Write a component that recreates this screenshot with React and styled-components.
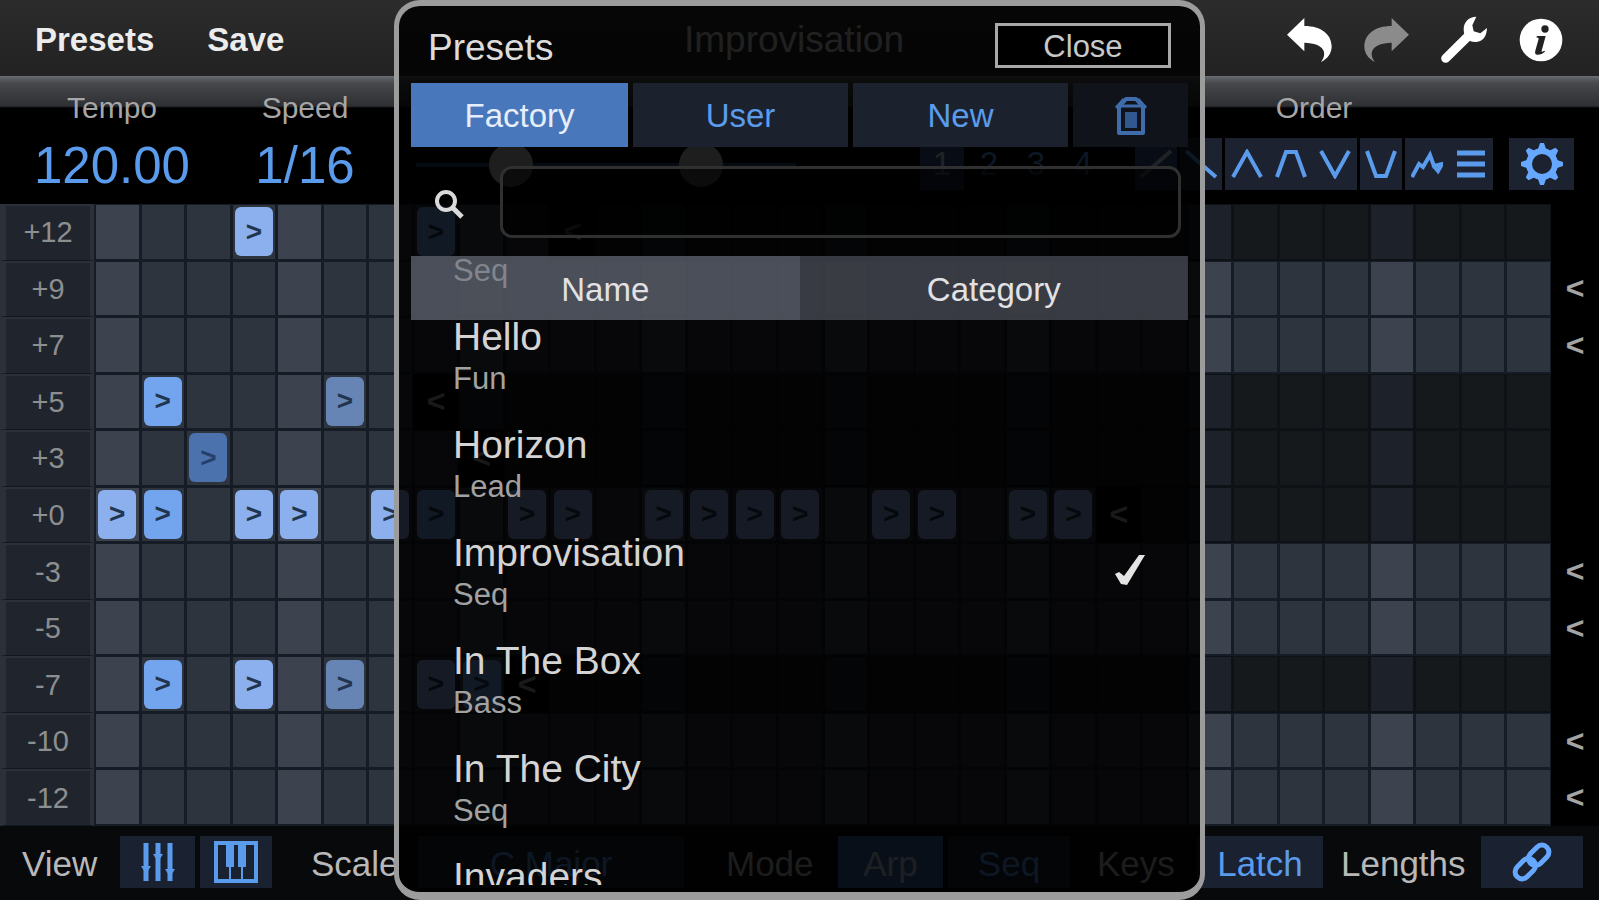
import React from "react";
import styled, { createGlobalStyle, css } from "styled-components";

const BLUE = "#5b9bec";

const GlobalStyle = createGlobalStyle`
  *, *::before, *::after { box-sizing: border-box; }
  html, body { margin: 0; background: #000; }
  body, button, input { font-family: "Liberation Sans", Arial, Helvetica, sans-serif; }
  button { margin: 0; padding: 0; border: 0; background: none; color: inherit; cursor: pointer; }
`;

const Screen = styled.div`
  position: relative;
  display: flex;
  flex-direction: column;
  min-height: 100vh;
  overflow: hidden;
  color: #c4c4c4;
`;

const TopBar = styled.header`
  display: grid;
  grid-template-columns: 1fr auto 1fr;
  align-items: center;
  height: 76px;
  padding: 4px 36px 0 35px;
  background: linear-gradient(#2c2c2c, #222);
`;

const TopActions = styled.div`
  display: flex;
  align-items: center;
  justify-content: ${(p) => (p.$end ? "flex-end" : "flex-start")};
  gap: ${(p) => (p.$end ? "32px" : "53px")};
`;

const TopButton = styled.button`
  display: flex;
  height: 72px;
  align-items: center;
  font-size: 33px;
  font-weight: 700;
  color: #ececec;
`;

const SongTitle = styled.h1`
  margin: 0 10px 0 0;
  font-size: 37px;
  line-height: 72px;
  font-weight: 400;
  color: #d8d8d8;
`;

const Params = styled.section`
  display: flex;
  height: 128px;
  padding: 0 25px 0 12px;
  background: linear-gradient(#6a6d71 0, #53565b 4px, #45474b 8px, #2d2f33 30px, #000 32px);
`;

const Param = styled.div`
  display: flex;
  flex-direction: column;
  align-items: center;
  flex: 0 0 ${(p) => p.$w || "auto"};
  margin-left: ${(p) => p.$gap || "0"};
  padding-top: 16px;
`;

const ParamLabel = styled.span`
  height: 32px;
  font-size: 30px;
  line-height: 32px;
  color: #a6a6a6;
`;

const ParamValue = styled.output`
  margin-top: 11px;
  font-size: 51px;
  line-height: 62px;
  color: ${BLUE};
`;

const Slider = styled.input`
  appearance: none;
  width: 190px;
  height: 44px;
  margin: 19px 0 0;
  background: linear-gradient(#2c4870, #2c4870) center / 100% 4px no-repeat;

  &::-webkit-slider-thumb {
    appearance: none;
    width: 44px;
    height: 44px;
    border-radius: 50%;
    background: #c8c8c8;
  }
`;

const ButtonStrip = styled.div`
  display: flex;
  gap: ${(p) => p.$gap || "0"};
  margin-top: 14px;
`;

const StripGroup = styled.div`
  display: flex;
  background: #1c2230;
`;

const StripButton = styled.button`
  display: flex;
  align-items: center;
  justify-content: center;
  width: ${(p) => p.$w || "44px"};
  height: 52px;
  font-size: 33px;
  background: ${(p) => (p.$on ? "#35598f" : "transparent")};
  color: ${(p) => (p.$on ? "#d8e4f8" : BLUE)};
`;

const Sequencer = styled.main`
  display: grid;
  flex: 1;
  grid-auto-rows: minmax(0, 1fr);
  background: #000;
`;

const Lane = styled.div`
  display: grid;
  grid-template-columns: 94px repeat(32, minmax(0, 1fr)) 48px;
`;

const LaneLabel = styled.div`
  display: flex;
  align-items: center;
  justify-content: center;
  border: solid #2c3039;
  border-width: 2px 4px 1px 6px;
  border-bottom-color: #12171e;
  background: #20252d;
  font-size: 29px;
  color: #8d8e90;
`;

const cellTone = (p) => {
  if (p.$end) return "#000";
  if (p.$off) return p.$beat ? "#1d2129" : "#16191c";
  return p.$beat ? "#3c434e" : "#2e343e";
};

const Cell = styled.button`
  display: flex;
  align-items: center;
  justify-content: center;
  border: solid ${(p) => (p.$end ? "#000" : p.$off ? "#0e1217" : "#161c25")};
  border-width: 1px 1px 2px 2px;
  background: ${cellTone};
  font-size: 32px;
  font-weight: 700;
  color: #aaa;
`;

const noteTones = {
  light: "#8bb0ed",
  mid: "#73a5ee",
  dim: "#6685b5",
  dark: "#4c72ae",
};

const Note = styled.span`
  display: flex;
  align-items: center;
  justify-content: center;
  width: 38px;
  height: 49px;
  flex: none;
  border-radius: 6px;
  background: ${(p) => noteTones[p.$tone]};
  color: ${(p) => (p.$tone === "dark" ? "#26406c" : "#22354f")};
  font-size: 28px;
  font-weight: 700;
`;

const LaneEnd = styled.div`
  display: flex;
  align-items: center;
  justify-content: center;
  font-size: 32px;
  font-weight: 700;
  color: #a4a4a4;
`;

const BottomBar = styled.footer`
  display: grid;
  grid-template-columns: 289fr 415fr 371fr 244fr 242fr;
  height: 74px;
  padding: 10px 16px 12px 22px;
  background: #08090b;
`;

const BottomGroup = styled.div`
  display: flex;
  align-items: center;
`;

const BottomLabel = styled.span`
  width: ${(p) => p.$w};
  flex: none;
  padding-top: 3px;
  font-size: 35px;
  line-height: 49px;
  color: #b8b8b8;
`;

const BottomButton = styled.button`
  display: flex;
  align-items: center;
  justify-content: center;
  width: ${(p) => p.$w};
  height: 52px;
  padding-top: 3px;
  margin-right: 5px;
  flex: none;
  font-size: 35px;
  background: ${(p) => (p.$on ? "#3f69aa" : "#1a2130")};
  color: ${(p) => (p.$on ? "#c4d2e8" : BLUE)};

  &:last-child { margin-right: 0; }
  svg { margin-bottom: 3px; }
`;

const Overlay = styled.div`
  position: absolute;
  inset: 0;
  display: flex;
  justify-content: center;
`;

const Dialog = styled.section`
  display: flex;
  flex-direction: column;
  width: 811px;
  max-width: 100%;
  padding: 0 12px 7px;
  overflow: hidden;
  border: solid #9c9c9c;
  border-width: 6px 5px 8px;
  border-radius: 26px;
  background: rgba(0, 0, 0, 0.85);
  background-clip: padding-box;
`;

const DialogHeader = styled.div`
  display: flex;
  align-items: center;
  justify-content: space-between;
  height: 77px;
  padding: 2px 17px 0 17px;
`;

const DialogTitle = styled.h2`
  margin: 0;
  padding-top: 4px;
  font-size: 37px;
  font-weight: 400;
  color: #dcdcdc;
`;

const CloseButton = styled.button`
  width: 176px;
  height: 45px;
  padding-top: 2px;
  border: 3px solid #a8a8a8;
  background: #000;
  font-size: 31px;
  line-height: 38px;
  color: #c8c8c8;
`;

const Tabs = styled.div`
  display: grid;
  grid-template-columns: 217fr 215fr 215fr 115fr;
  gap: 5px;
  height: 64px;
`;

const tabOn = css`
  background: #4977bb;
  color: #e6eefa;
`;

const Tab = styled.button`
  display: flex;
  align-items: center;
  justify-content: center;
  padding-top: 2px;
  font-size: 33px;
  background: ${(p) => (p.$dim ? "#10131a" : "#1c222d")};
  color: ${(p) => (p.$dim ? "#3f6cab" : BLUE)};
  ${(p) => p.$on && tabOn}
`;

const SearchRow = styled.label`
  display: flex;
  align-items: center;
  gap: 36px;
  padding: 19px 7px 18px 23px;

  svg { margin-top: 3px; }
`;

const SearchInput = styled.input`
  flex: 1;
  min-width: 0;
  height: 72px;
  padding: 0 16px;
  border: 3px solid #303030;
  border-radius: 12px;
  outline: 0;
  background: rgba(0, 0, 0, 0.6);
  font-size: 33px;
  color: #ddd;
`;

const Browser = styled.div`
  display: grid;
  flex: 1;
  grid-template-rows: minmax(0, 1fr);
  min-height: 0;
  overflow: hidden;
`;

const SortBar = styled.div`
  display: grid;
  grid-area: 1 / 1;
  grid-template-columns: 1fr 1fr;
  height: 64px;
  z-index: 1;
`;

const SortButton = styled.button`
  padding-top: 3px;
  font-size: 33px;
  color: #e2e2e4;
  background: ${(p) => (p.$on ? "rgba(112, 118, 132, 0.65)" : "rgba(84, 86, 98, 0.66)")};
`;

const PresetList = styled.ul`
  grid-area: 1 / 1;
  margin: 0;
  padding: 0;
  overflow: hidden;
  list-style: none;
`;

const Preset = styled.li`
  display: flex;
  align-items: center;
  justify-content: space-between;
  height: 108px;
  padding: 0 43px 0 42px;

  &:first-child {
    height: 46px;
    align-items: flex-end;
    padding-bottom: 12px;
  }

  > svg { margin-bottom: 4px; }
`;

const PresetButton = styled.button`
  display: flex;
  flex-direction: column;
  text-align: left;
`;

const PresetName = styled.span`
  font-size: 39px;
  line-height: 46px;
  color: #d4d4d4;
`;

const PresetCategory = styled.span`
  height: 38px;
  font-size: 31px;
  line-height: 38px;
  color: #a2a2a2;
`;

const Icon = ({ w, h, box, children, ...rest }) => (
  <svg width={w} height={h} viewBox={box} fill="none" stroke="currentColor" aria-hidden="true" {...rest}>
    {children}
  </svg>
);

const arrow = "M0 50 52 0V24C104 24 133 50 134 84C134 106 122 122 102 132C122 106 114 76 52 74V100Z";

const UndoIcon = () => (
  <Icon w={45} h={44} box="0 0 135 132"><path d={arrow} fill="#fff" stroke="none" /></Icon>
);
const RedoIcon = () => (
  <Icon w={45} h={44} box="0 0 135 132">
    <path d={arrow} transform="translate(135 0) scale(-1 1)" fill="#8b8b8b" stroke="none" />
  </Icon>
);
const WrenchIcon = () => (
  <Icon w={46} h={48} box="0 0 138 144">
    <path d="M14 127 82 60" stroke="#fff" strokeWidth="27" strokeLinecap="round" />
    <path d="M106 2C84 2 68 18 68 40C68 66 86 80 106 78C126 76 137 62 138 36L118 52L98 46L94 28Z" fill="#fff" stroke="none" />
  </Icon>
);
const InfoIcon = () => (
  <Icon w={44} h={44} box="0 0 132 132">
    <circle cx="66" cy="66" r="64" fill="#fff" stroke="none" />
    <circle cx="78" cy="33" r="11" fill="#222" stroke="none" />
    <path d="M54 54H80L68 98Q66 104 76 98L78 101Q66 112 54 110Q46 108 49 98L59 62Q58 58 52 59Z" fill="#222" stroke="none" />
  </Icon>
);
const GearIcon = () => (
  <Icon w={44} h={44} box="-22 -22 44 44" color="#66a8ff">
    <circle r="13" strokeWidth="6" />
    {[0, 45, 90, 135, 180, 225, 270, 315].map((a) => (
      <path key={a} d="M-4-15-2-21H2L4-15Z" fill="currentColor" stroke="none" transform={`rotate(${a})`} />
    ))}
  </Icon>
);
const TrashIcon = () => (
  <Icon w={32} h={42} box="0 0 32 42">
    <path d="M4 12 11 4H21L28 12V38H4Z" strokeWidth="4" strokeLinejoin="round" />
    <path d="M1 13 9 4M31 13 23 4M6 11H26" strokeWidth="3" />
    <path d="M10 17H22V33H10Z" fill="#31598f" stroke="none" />
  </Icon>
);
const SearchIcon = () => (
  <Icon w={30} h={30} box="0 0 30 30" color="#dadada">
    <circle cx="12" cy="12" r="9" strokeWidth="4" />
    <path d="M18 18 28 28" strokeWidth="5" />
  </Icon>
);
const CheckIcon = () => (
  <Icon w={30} h={32} box="0 0 30 32">
    <path d="M0 20 4 18 9 22 24 1 30 1 12 31 6 30Z" fill="#e4e4e4" stroke="none" />
  </Icon>
);
const MixerIcon = () => (
  <Icon w={36} h={40} box="0 0 36 40">
    <path d="M6 1V39M18 1V39M30 1V39" strokeWidth="5" />
    <path d="M1 24H11L6 32ZM13 12H23L18 20ZM25 27H35L30 35Z" fill="currentColor" stroke="none" />
  </Icon>
);
const KeysIcon = () => (
  <Icon w={44} h={42} box="0 0 44 42">
    <rect x="2" y="2" width="40" height="38" strokeWidth="4" />
    <path d="M12 2H20V26H12ZM24 2H32V26H24Z" fill="currentColor" stroke="none" />
    <path d="M16 24V40M28 24V40" strokeWidth="2" />
  </Icon>
);
const LinkIcon = () => (
  <Icon w={40} h={40} box="0 0 40 40" color="#66a8ff">
    <g transform="rotate(-45 20 20)" strokeWidth="5">
      <rect x="-1" y="13" width="23" height="14" rx="7" />
      <rect x="18" y="13" width="23" height="14" rx="7" />
    </g>
  </Icon>
);

const OrderIcon = ({ d, width = 4 }) => (
  <Icon w={32} h={30} box="0 0 32 30"><path d={d} strokeWidth={width} /></Icon>
);

const orderGroups = [
  [{ name: "Up", d: "M1 28 31 2", on: true }],
  [{ name: "Down", d: "M1 2 31 28" }],
  [
    { name: "Up down", d: "M2 28 16 3 30 28" },
    { name: "Up down hold", d: "M2 28 11 3H21L30 28" },
    { name: "Down up", d: "M2 2 16 27 30 2" },
  ],
  [{ name: "Down up hold", d: "M2 2 11 27H21L30 2" }],
  [
    { name: "Random", d: "M1 28 8 15 12 18 19 6 23 17 31 15 27 22 22 16" },
    { name: "Chord", d: "M2 4H30M2 15H30M2 26H30", width: 5 },
  ],
];

const lanes = [
  { label: "+12", end: 10, notes: { 3: "light", 7: "mid" } },
  { label: "+9" },
  { label: "+7" },
  { label: "+5", end: 7, notes: { 1: "mid", 5: "dim" } },
  { label: "+3", end: 8, notes: { 2: "dark" } },
  {
    label: "+0",
    end: 22,
    notes: {
      0: "light", 1: "mid", 3: "light", 4: "light", 6: "light", 7: "mid", 9: "light", 10: "light",
      12: "light", 13: "light", 14: "light", 15: "light", 17: "light", 18: "light", 20: "light", 21: "light",
    },
  },
  { label: "-3" },
  { label: "-5" },
  { label: "-7", end: 9, notes: { 1: "mid", 3: "light", 5: "dim", 7: "light", 8: "mid" } },
  { label: "-10" },
  { label: "-12" },
];

const presets = [
  { category: "Seq" },
  { name: "Hello", category: "Fun" },
  { name: "Horizon", category: "Lead" },
  { name: "Improvisation", category: "Seq", selected: true },
  { name: "In The Box", category: "Bass" },
  { name: "In The City", category: "Seq" },
  { name: "Invaders", category: "" },
];

const steps = Array.from({ length: 32 }, (_, i) => i);

function SequencerLane({ label, end = 32, notes = {} }) {
  return (
    <Lane>
      <LaneLabel>{label}</LaneLabel>
      {steps.map((i) => (
        <Cell
          key={i}
          aria-label={`${label} step ${i + 1}`}
          $beat={i % 4 === 0}
          $off={i > end}
          $end={i === end}
        >
          {notes[i] && <Note $tone={notes[i]}>&gt;</Note>}
          {i === end && "<"}
        </Cell>
      ))}
      <LaneEnd>{end === 32 && "<"}</LaneEnd>
    </Lane>
  );
}

function PresetDialog() {
  return (
    <Overlay>
      <Dialog role="dialog" aria-labelledby="preset-title">
        <DialogHeader>
          <DialogTitle id="preset-title">Presets</DialogTitle>
          <CloseButton>Close</CloseButton>
        </DialogHeader>
        <Tabs>
          <Tab $on>Factory</Tab>
          <Tab>User</Tab>
          <Tab>New</Tab>
          <Tab $dim aria-label="Delete preset"><TrashIcon /></Tab>
        </Tabs>
        <SearchRow>
          <SearchIcon />
          <SearchInput type="search" aria-label="Search presets" />
        </SearchRow>
        <Browser>
          <SortBar>
            <SortButton $on>Name</SortButton>
            <SortButton>Category</SortButton>
          </SortBar>
          <PresetList>
            {presets.map((p, i) => (
              <Preset key={i}>
                <PresetButton>
                  {p.name && <PresetName>{p.name}</PresetName>}
                  <PresetCategory>{p.category}</PresetCategory>
                </PresetButton>
                {p.selected && <CheckIcon />}
              </Preset>
            ))}
          </PresetList>
        </Browser>
      </Dialog>
    </Overlay>
  );
}

export default function App() {
  return (
    <Screen>
      <GlobalStyle />
      <TopBar>
        <TopActions>
          <TopButton>Presets</TopButton>
          <TopButton>Save</TopButton>
        </TopActions>
        <SongTitle>Improvisation</SongTitle>
        <TopActions $end>
          <TopButton aria-label="Undo"><UndoIcon /></TopButton>
          <TopButton aria-label="Redo"><RedoIcon /></TopButton>
          <TopButton aria-label="Settings"><WrenchIcon /></TopButton>
          <TopButton aria-label="Info"><InfoIcon /></TopButton>
        </TopActions>
      </TopBar>
      <Params>
        <Param $w="200px">
          <ParamLabel>Tempo</ParamLabel>
          <ParamValue>120.00</ParamValue>
        </Param>
        <Param $w="186px">
          <ParamLabel>Speed</ParamLabel>
          <ParamValue>1/16</ParamValue>
        </Param>
        <Param $w="190px" $gap="18px">
          <ParamLabel />
          <Slider type="range" aria-label="Gate" defaultValue="50" />
        </Param>
        <Param $w="190px">
          <ParamLabel />
          <Slider type="range" aria-label="Swing" defaultValue="50" />
        </Param>
        <Param $gap="auto">
          <ParamLabel />
          <ButtonStrip $gap="3px">
            {[1, 2, 3, 4].map((n) => (
              <StripButton key={n} $on={n === 1}>{n}</StripButton>
            ))}
          </ButtonStrip>
        </Param>
        <Param $gap="30px">
          <ParamLabel>Order</ParamLabel>
          <ButtonStrip $gap="3px">
            {orderGroups.map((group, i) => (
              <StripGroup key={i}>
                {group.map((o) => (
                  <StripButton key={o.name} aria-label={o.name} $on={o.on} $w={group.length === 1 ? "42px" : "44px"}>
                    <OrderIcon d={o.d} width={o.width} />
                  </StripButton>
                ))}
              </StripGroup>
            ))}
          </ButtonStrip>
        </Param>
        <Param $gap="16px">
          <ParamLabel />
          <ButtonStrip>
            <StripGroup>
              <StripButton $w="65px" aria-label="Order options"><GearIcon /></StripButton>
            </StripGroup>
          </ButtonStrip>
        </Param>
      </Params>
      <Sequencer>
        {lanes.map((lane) => (
          <SequencerLane key={lane.label} {...lane} />
        ))}
      </Sequencer>
      <BottomBar>
        <BottomGroup>
          <BottomLabel $w="98px">View</BottomLabel>
          <BottomButton $w="75px" aria-label="Mixer view"><MixerIcon /></BottomButton>
          <BottomButton $w="72px" aria-label="Keyboard view"><KeysIcon /></BottomButton>
        </BottomGroup>
        <BottomGroup>
          <BottomLabel $w="107px">Scale</BottomLabel>
          <BottomButton $w="266px">C Major</BottomButton>
        </BottomGroup>
        <BottomGroup>
          <BottomLabel $w="112px">Mode</BottomLabel>
          <BottomButton $w="105px" $on>Arp</BottomButton>
          <BottomButton $w="122px">Seq</BottomButton>
        </BottomGroup>
        <BottomGroup>
          <BottomLabel $w="100px">Keys</BottomLabel>
          <BottomButton $w="126px">Latch</BottomButton>
        </BottomGroup>
        <BottomGroup>
          <BottomLabel $w="140px">Lengths</BottomLabel>
          <BottomButton $w="102px" aria-label="Link lengths"><LinkIcon /></BottomButton>
        </BottomGroup>
      </BottomBar>
      <PresetDialog />
    </Screen>
  );
}
